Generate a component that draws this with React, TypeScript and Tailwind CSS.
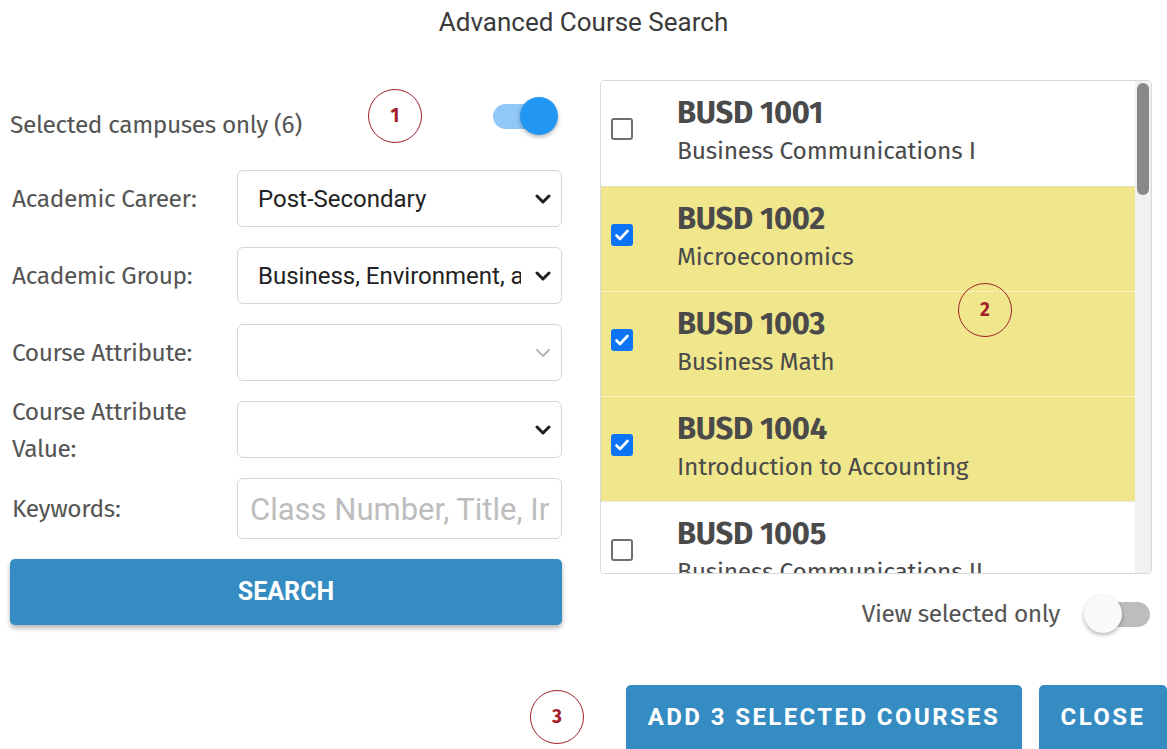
import { useState } from "react";

type Course = { code: string; title: string; checked: boolean };

const courses: Course[] = [
  { code: "BUSD 1001", title: "Business Communications I", checked: false },
  { code: "BUSD 1002", title: "Microeconomics", checked: true },
  { code: "BUSD 1003", title: "Business Math", checked: true },
  { code: "BUSD 1004", title: "Introduction to Accounting", checked: true },
  { code: "BUSD 1005", title: "Business Communications II", checked: false },
];

const label = "font-['Fira_Sans','Open_Sans',sans-serif] text-[#555] text-[24.5px] tracking-[-0.4px]";

function Chevron({ light }: { light?: boolean }) {
  return (
    <svg width="16" height="10" viewBox="0 0 16 10" className="shrink-0">
      <path
        d="M2 2l6 6 6-6"
        fill="none"
        stroke={light ? "#b5b5b5" : "#1f1f1f"}
        strokeWidth={light ? 2 : 3}
        strokeLinecap="round"
        strokeLinejoin="round"
      />
    </svg>
  );
}

function SelectBox({ value, light }: { value?: string; light?: boolean }) {
  return (
    <div className="flex h-[57px] w-[325px] items-center overflow-hidden rounded-[6px] border border-[#d6d6d6] bg-white pl-[20px] pr-[10px]">
      <span className="mr-[14px] min-w-0 flex-1 overflow-hidden whitespace-nowrap font-['Roboto',sans-serif] text-[24px] text-[#222]">
        {value}
      </span>
      <Chevron light={light} />
    </div>
  );
}

function Field({ name, children }: { name: React.ReactNode; children: React.ReactNode }) {
  return (
    <div className="flex items-center">
      <div className={`${label} w-[227px] shrink-0 pl-[2px] leading-[37px]`}>{name}</div>
      {children}
    </div>
  );
}

function Check({ on }: { on: boolean }) {
  if (on)
    return (
      <span className="flex h-[22px] w-[22px] items-center justify-center rounded-[3px] bg-[#0b74f5]">
        <svg width="14" height="12" viewBox="0 0 14 12">
          <path d="M1.5 6.5l3.5 3.5 7.5-8" fill="none" stroke="white" strokeWidth="2.6" strokeLinecap="round" strokeLinejoin="round" />
        </svg>
      </span>
    );
  return <span className="block h-[22px] w-[22px] rounded-[3px] border-2 border-[#6f6f6f] bg-white" />;
}

function Marker({ n, className }: { n: number; className: string }) {
  return (
    <div
      className={`absolute flex h-[54px] w-[54px] items-center justify-center rounded-full border-[1.5px] border-[#a3202a] font-['Fira_Sans','Open_Sans',sans-serif] text-[19px] font-bold text-[#a3202a] ${className}`}
    >
      {n}
    </div>
  );
}

export default function App() {
  const [campus] = useState(true);

  return (
    <div className="relative h-[749px] w-[1167px] overflow-hidden bg-white">
      <header className="flex h-[45px] items-center justify-center font-['Roboto',sans-serif] text-[26px] text-[#3a3a3a]">
        Advanced Course Search
      </header>

      <div className="flex gap-[38px] pl-[10px] pt-[35px]">
        {/* filters */}
        <div className="flex w-[552px] flex-col">
          <div className="flex h-[72px] items-center justify-between">
            <span className={`${label} mt-[18px]`}>Selected campuses only (6)</span>
            <span className="relative mr-[4px] flex h-[38px] w-[66px] items-center">
              <span className="ml-[1px] h-[25px] w-[62px] rounded-full bg-[#90c8f8]" />
              <span
                className={`absolute top-0 h-[38px] w-[38px] rounded-full bg-[#2196f3] shadow-[0_2px_4px_rgba(0,0,0,0.3)] ${campus ? "right-0" : "left-0"}`}
              />
            </span>
          </div>

          <div className="mt-[18px] flex flex-col gap-[20px]">
            <div className="h-[57px]">
              <Field name="Academic Career:">
                <SelectBox value="Post-Secondary" />
              </Field>
            </div>
            <div className="h-[57px]">
              <Field name="Academic Group:">
                <SelectBox value="Business, Environment, and Technology" />
              </Field>
            </div>
            <div className="h-[57px]">
              <Field name="Course Attribute:">
                <SelectBox light />
              </Field>
            </div>
            <div className="flex h-[57px] items-center">
              <Field name={<>Course Attribute<br />Value:</>}>
                <SelectBox />
              </Field>
            </div>
            <Field name="Keywords:">
              <div className="flex h-[61px] w-[325px] items-center overflow-hidden rounded-[6px] border border-[#d6d6d6] bg-white pl-[12px] pr-[12px] pt-[4px]">
                <span className="overflow-hidden whitespace-nowrap font-['Roboto',sans-serif] text-[31px] text-[#bdbdbd]">
                  Class Number, Title, Instructor
                </span>
              </div>
            </Field>
          </div>

          <button className="mt-[20px] h-[66px] w-[552px] rounded-[5px] bg-[#348cc2] font-['Roboto',sans-serif] text-[25px] font-bold text-white shadow-[0_3px_5px_rgba(0,0,0,0.3)]">
            SEARCH
          </button>
        </div>

        {/* course list */}
        <div className="flex w-[552px] flex-col">
          <div className="flex h-[494px] overflow-hidden rounded-[4px] border border-[#d9d9d9]">
            <div className="flex-1">
              {courses.map((c, i) => {
                const between = i > 0 && c.checked && courses[i - 1].checked;
                return (
                  <div
                    key={c.code}
                    className={`flex h-[105px] items-start ${i > 0 ? "border-t border-dotted" : ""} ${between ? "border-[#fbfbf4]" : "border-[#d9d9d9]"} ${c.checked ? "bg-[#f0e68c]" : "bg-white"}`}
                  >
                    <div className="shrink-0 pl-[10px] pt-[37px]">
                      <Check on={c.checked} />
                    </div>
                    <div className="whitespace-nowrap pl-[44px] pt-[13px] font-['Fira_Sans','Open_Sans',sans-serif] text-[#4a4a4a]">
                      <div className="text-[31px] font-bold leading-[38px] tracking-[-0.3px]">{c.code}</div>
                      <div className="text-[24.5px] leading-[38px] tracking-[-0.2px]">{c.title}</div>
                    </div>
                  </div>
                );
              })}
            </div>
            <div className="w-[16px] bg-[#f1f1f1] pt-[2px]">
              <div className="mx-auto h-[112px] w-[12px] rounded-full bg-[#888]" />
            </div>
          </div>

          <div className="mt-[20px] flex h-[40px] items-center justify-end gap-[24px] pr-[2px]">
            <span className={`${label} tracking-[-0.2px]`}>View selected only</span>
            <span className="relative flex h-[38px] w-[66px] items-center">
              <span className="ml-[4px] h-[25px] w-[62px] rounded-full bg-[#bdbdbd]" />
              <span className="absolute left-0 top-0 h-[38px] w-[38px] rounded-full bg-[#fafafa] shadow-[0_2px_4px_rgba(0,0,0,0.3)]" />
            </span>
          </div>
        </div>
      </div>

      <div className="mt-[51px] flex gap-[17px] pl-[626px]">
        <button className="h-[64px] w-[396px] shrink-0 rounded-t-[5px] bg-[#348cc2] font-['Roboto',sans-serif] text-[24px] font-bold tracking-[2.4px] text-white">
          ADD 3 SELECTED COURSES
        </button>
        <button className="h-[64px] w-[128px] shrink-0 rounded-t-[5px] bg-[#348cc2] font-['Roboto',sans-serif] text-[24px] font-bold tracking-[2.4px] text-white">
          CLOSE
        </button>
      </div>

      <Marker n={1} className="left-[368px] top-[89px]" />
      <Marker n={2} className="left-[958px] top-[283px]" />
      <Marker n={3} className="left-[530px] top-[690px]" />
    </div>
  );
}
